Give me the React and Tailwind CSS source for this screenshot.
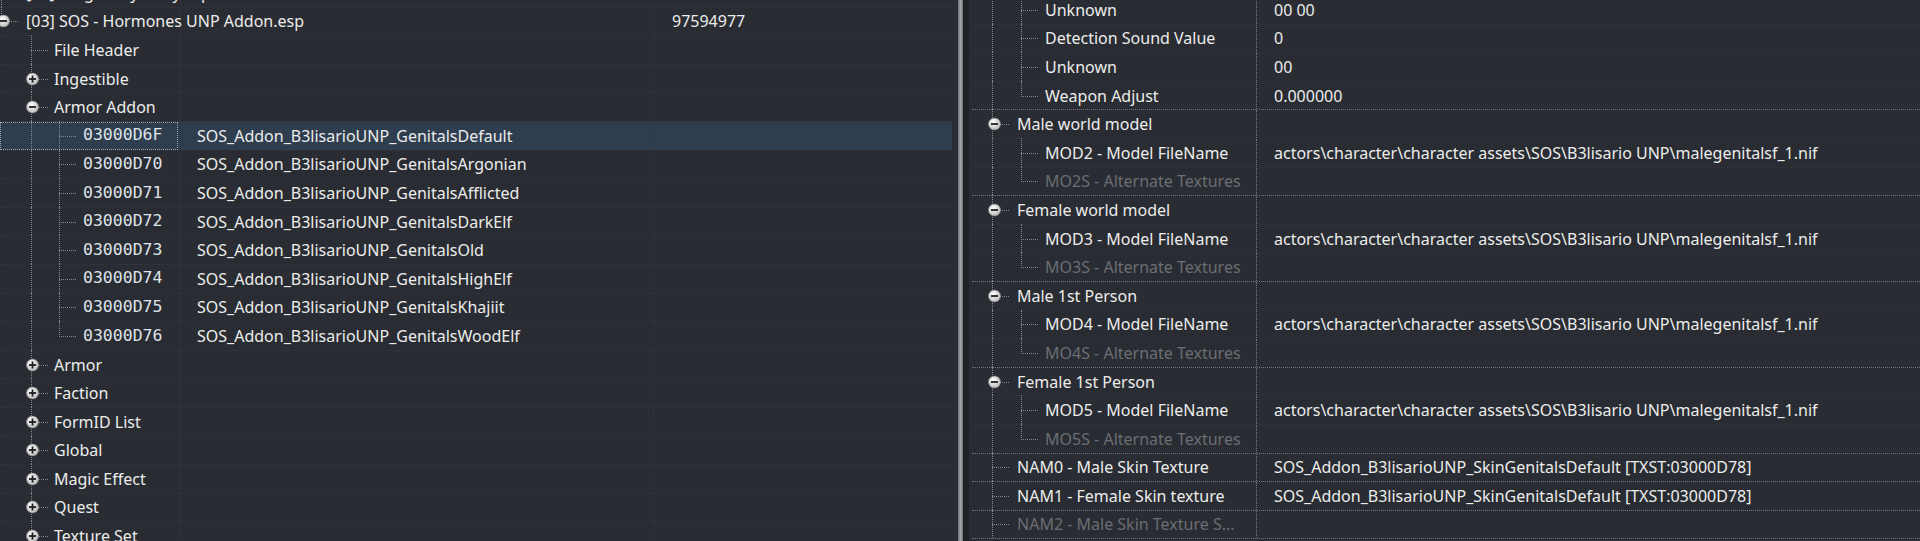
import React from "react";

const PATH = "actors\\character\\character assets\\SOS\\B3lisario UNP\\malegenitalsf_1.nif";
const TEX = "SOS_Addon_B3lisarioUNP_SkinGenitalsDefault [TXST:03000D78]";

const leftRows = [
  { lvl: 0, tog: "plus", text: "[02] Pregnancy Body.esp" },
  { lvl: 0, tog: "minus", text: "[03] SOS - Hormones UNP Addon.esp", last: true, extra: "97594977" },
  { lvl: 1, text: "File Header" },
  { lvl: 1, tog: "plus", text: "Ingestible" },
  { lvl: 1, tog: "minus", text: "Armor Addon" },
  { lvl: 2, id: "03000D6F", val: "SOS_Addon_B3lisarioUNP_GenitalsDefault", sel: true },
  { lvl: 2, id: "03000D70", val: "SOS_Addon_B3lisarioUNP_GenitalsArgonian" },
  { lvl: 2, id: "03000D71", val: "SOS_Addon_B3lisarioUNP_GenitalsAfflicted" },
  { lvl: 2, id: "03000D72", val: "SOS_Addon_B3lisarioUNP_GenitalsDarkElf" },
  { lvl: 2, id: "03000D73", val: "SOS_Addon_B3lisarioUNP_GenitalsOld" },
  { lvl: 2, id: "03000D74", val: "SOS_Addon_B3lisarioUNP_GenitalsHighElf" },
  { lvl: 2, id: "03000D75", val: "SOS_Addon_B3lisarioUNP_GenitalsKhajiit" },
  { lvl: 2, id: "03000D76", val: "SOS_Addon_B3lisarioUNP_GenitalsWoodElf", last: true },
  { lvl: 1, tog: "plus", text: "Armor" },
  { lvl: 1, tog: "plus", text: "Faction" },
  { lvl: 1, tog: "plus", text: "FormID List" },
  { lvl: 1, tog: "plus", text: "Global" },
  { lvl: 1, tog: "plus", text: "Magic Effect" },
  { lvl: 1, tog: "plus", text: "Quest" },
  { lvl: 1, tog: "plus", text: "Texture Set" },
];

const rightRows = [
  { lvl: 2, text: "Unknown", val: "00 00" },
  { lvl: 2, text: "Detection Sound Value", val: "0" },
  { lvl: 2, text: "Unknown", val: "00" },
  { lvl: 2, text: "Weapon Adjust", val: "0.000000", last: true },
  { lvl: 1, tog: "minus", text: "Male world model" },
  { lvl: 2, text: "MOD2 - Model FileName", val: PATH },
  { lvl: 2, text: "MO2S - Alternate Textures", dim: true, last: true },
  { lvl: 1, tog: "minus", text: "Female world model" },
  { lvl: 2, text: "MOD3 - Model FileName", val: PATH },
  { lvl: 2, text: "MO3S - Alternate Textures", dim: true, last: true },
  { lvl: 1, tog: "minus", text: "Male 1st Person" },
  { lvl: 2, text: "MOD4 - Model FileName", val: PATH },
  { lvl: 2, text: "MO4S - Alternate Textures", dim: true, last: true },
  { lvl: 1, tog: "minus", text: "Female 1st Person" },
  { lvl: 2, text: "MOD5 - Model FileName", val: PATH },
  { lvl: 2, text: "MO5S - Alternate Textures", dim: true, last: true },
  { lvl: 1, text: "NAM0 - Male Skin Texture", val: TEX },
  { lvl: 1, text: "NAM1 - Female Skin texture", val: TEX },
  { lvl: 1, text: "NAM2 - Male Skin Texture S...", dim: true },
];

// tree geometry, one entry per level
const L_LINE = ["left-[1px]", "left-[31px]", "left-[59px]"];
const L_TOG = ["left-[-3px]", "left-[26px]", "left-[53px]"];
const L_TEXT = ["pl-[26px]", "pl-[54px]", "pl-[83px]"];
const R_LINE = ["left-[-8px]", "left-[20px]", "left-[49px]"];
const R_TOG = ["left-[-12px]", "left-[16px]", "left-[45px]"];
const R_TEXT = ["pl-[17px]", "pl-[45px]", "pl-[73px]"];

const LINE = "absolute border-l border-dotted border-[#85888d]";

function Toggle({ open, className }) {
  return (
    <svg width="13" height="13" viewBox="0 0 13 13" className={className}>
      <defs>
        <radialGradient id="tgl" cx="40%" cy="35%" r="75%">
          <stop offset="0%" stopColor="#ffffff" />
          <stop offset="100%" stopColor="#b4b4b4" />
        </radialGradient>
      </defs>
      <circle cx="6.5" cy="6.5" r="6" fill="url(#tgl)" stroke="#8a8a8a" strokeWidth="0.8" />
      <rect x="3" y="5.6" width="7" height="1.8" fill="#1e1e1e" />
      {!open && <rect x="5.6" y="3" width="1.8" height="7" fill="#1e1e1e" />}
    </svg>
  );
}

function Guides({ row, line, tog }) {
  const anc = row.lvl === 2 ? [1] : [];
  return (
    <>
      {anc.map((k) => (
        <div key={k} className={`${LINE} ${line[k]} -top-px bottom-0`} />
      ))}
      <div className={`${LINE} ${line[row.lvl]} -top-px ${row.last ? "h-1/2" : "bottom-0"}`} />
      <div className={`absolute top-1/2 ${line[row.lvl]} w-[17px] border-t border-dotted border-[#85888d]`} />
      {row.tog && (
        <div className={`absolute top-1/2 -translate-y-1/2 ${tog[row.lvl]}`}>
          <Toggle open={row.tog === "minus"} />
        </div>
      )}
    </>
  );
}

function LeftRow({ row }) {
  return (
    <div
      className={`relative flex h-[28.6px] items-center border-t border-dotted border-[#33363c] ${
        row.sel ? "bg-[#2f3e4f]" : ""
      }`}
    >
      <div className="relative h-full w-[180px] shrink-0">
        <Guides row={row} line={L_LINE} tog={L_TOG} />
        {row.sel && (
          <div className="absolute inset-y-0 left-0 w-[178px] border border-dotted border-[#9aa3ad]" />
        )}
        <div
          className={`relative flex h-full items-center whitespace-nowrap ${L_TEXT[row.lvl]} ${
            row.id
              ? "font-['DejaVu_Sans_Mono',monospace] text-[16.5px] text-[#dde2e8]"
              : "text-[16px] text-[#ececec]"
          }`}
        >
          {row.id || row.text}
        </div>
      </div>
      <div className="flex h-full w-[473px] shrink-0 items-center whitespace-nowrap border-l border-dotted border-[#33363c] pl-[16px] text-[16px] text-[#ececec]">
        {row.val}
      </div>
      <div className="flex h-full flex-1 items-center border-l border-dotted border-[#33363c] pl-[18px] text-[16px] text-[#ececec]">
        {row.extra}
      </div>
    </div>
  );
}

function RightRow({ row }) {
  const strong = row.lvl === 1;
  return (
    <div
      className={`relative flex h-[28.6px] items-center border-t border-dotted ${
        strong ? "border-[#74777c]" : "border-[#33363c]"
      }`}
    >
      <div className="relative h-full w-[284px] shrink-0">
        <Guides row={row} line={R_LINE} tog={R_TOG} />
        <div
          className={`relative flex h-full items-center whitespace-nowrap text-[16px] ${R_TEXT[row.lvl]} ${
            row.dim ? "text-[#6b6e73]" : "text-[#ececec]"
          }`}
        >
          {row.text}
        </div>
      </div>
      <div className="flex h-full flex-1 items-center whitespace-nowrap border-l border-dotted border-[#74777c] pl-[17px] text-[16px] text-[#ececec]">
        {row.val}
      </div>
    </div>
  );
}

export default function App() {
  return (
    <div className="flex h-[541px] w-[1920px] overflow-hidden bg-[#292c32] font-['Noto_Sans',sans-serif]">
      <div className="h-full w-[958px] shrink-0 overflow-hidden pr-[6px]">
        <div className="-mt-[22px]">
          {leftRows.map((row, i) => (
            <LeftRow key={i} row={row} />
          ))}
        </div>
      </div>

      <div className="flex h-full w-[11px] shrink-0">
        <div className="h-full w-[5px] bg-gradient-to-r from-[#6b6e72] via-[#a4a7ab] to-[#6b6e72]" />
        <div className="h-full w-[6px] bg-[#1f2126]" />
      </div>

      <div className="h-full flex-1 overflow-hidden pl-[3px]">
        <div className="-mt-[5px]">
          {rightRows.map((row, i) => (
            <RightRow key={i} row={row} />
          ))}
          <div className="h-[28.6px] border-t border-dotted border-[#74777c]" />
        </div>
      </div>
    </div>
  );
}
